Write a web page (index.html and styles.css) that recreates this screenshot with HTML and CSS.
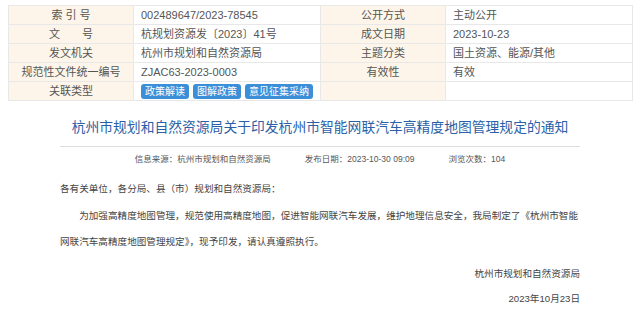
FILE: index.html
```html
<!DOCTYPE html>
<html lang="zh-CN">
<head>
<meta charset="utf-8">
<title>杭州市规划和自然资源局关于印发杭州市智能网联汽车高精度地图管理规定的通知</title>
<link rel="stylesheet" href="styles.css">
</head>
<body>
<table class="info">
  <colgroup>
    <col class="c-label"><col class="c-value"><col class="c-label"><col class="c-value">
  </colgroup>
  <tr>
    <td class="label">索&nbsp;引&nbsp;号</td>
    <td class="value">002489647/2023-78545</td>
    <td class="label">公开方式</td>
    <td class="value">主动公开</td>
  </tr>
  <tr>
    <td class="label">文&emsp;&emsp;号</td>
    <td class="value">杭规划资源发〔2023〕41号</td>
    <td class="label">成文日期</td>
    <td class="value">2023-10-23</td>
  </tr>
  <tr>
    <td class="label">发文机关</td>
    <td class="value">杭州市规划和自然资源局</td>
    <td class="label">主题分类</td>
    <td class="value">国土资源、能源/其他</td>
  </tr>
  <tr>
    <td class="label">规范性文件统一编号</td>
    <td class="value">ZJAC63-2023-0003</td>
    <td class="label">有效性</td>
    <td class="value">有效</td>
  </tr>
  <tr>
    <td class="label">关联类型</td>
    <td class="value">
      <div class="tags">
        <span class="tag">政策解读</span>
        <span class="tag">图解政策</span>
        <span class="tag">意见征集采纳</span>
      </div>
    </td>
    <td class="label"></td>
    <td class="value"></td>
  </tr>
</table>

<div class="article">
  <h1 class="title">杭州市规划和自然资源局关于印发杭州市智能网联汽车高精度地图管理规定的通知</h1>
  <div class="meta">
    <span>信息来源：杭州市规划和自然资源局</span>
    <span>发布日期：2023-10-30 09:09</span>
    <span>浏览次数：104</span>
  </div>
  <div class="content">
    <p>各有关单位，各分局、县（市）规划和自然资源局：</p>
    <p class="indent">为加强高精度地图管理，规范使用高精度地图，促进智能网联汽车发展，维护地理信息安全，我局制定了《杭州市智能网联汽车高精度地图管理规定》，现予印发，请认真遵照执行。</p>
    <div class="sign">
      <p>杭州市规划和自然资源局</p>
      <p>2023年10月23日</p>
    </div>
  </div>
</div>
</body>
</html>
```
FILE: styles.css
```css
html, body {
  margin: 0;
  padding: 0;
  background: #ffffff;
}
body {
  padding-top: 5px;
  font-family: "Liberation Sans", "Noto Sans CJK SC", sans-serif;
  color: #333333;
}
.info {
  width: 624px;
  margin: 0 8px;
  border-collapse: collapse;
  table-layout: fixed;
  font-size: 11px;
}
.c-label { width: 125px; }
.c-value { width: 187px; }
.info td {
  height: 18px;
  padding: 0 7px;
  border: 1px solid #e8e8e8;
  line-height: 16px;
  white-space: nowrap;
  overflow: hidden;
  color: #555555;
}
.info td.label {
  background: #fdf5e9;
  text-align: center;
}
.info td.value {
  text-align: left;
}
.tags {
  display: flex;
  gap: 4px;
  padding-top: 1px;
}
.tag {
  display: inline-block;
  background: #3a8fd8;
  color: #ffffff;
  font-size: 10px;
  line-height: 15px;
  height: 15px;
  padding: 0 4px;
  border-radius: 3px;
}
.article {
  width: 520px;
  margin: 0 auto;
}
.title {
  margin: 17px 0 0;
  padding-bottom: 8px;
  border-bottom: 1px solid #dddddd;
  font-size: 13.8px;
  line-height: 20px;
  font-weight: normal;
  color: #2b5fa6;
  text-align: center;
  white-space: nowrap;
}
.meta {
  display: flex;
  justify-content: center;
  gap: 34px;
  margin-top: 6px;
  font-size: 8.5px;
  line-height: 12px;
  color: #555555;
}
.content {
  margin-top: 11px;
  font-size: 9.6px;
  color: #444444;
}
.content p {
  margin: 0;
  line-height: 26.5px;
}
.content .indent {
  text-indent: 2em;
}
.sign {
  margin-top: 5px;
  text-align: right;
}
.sign p {
  line-height: 25px;
}
```
